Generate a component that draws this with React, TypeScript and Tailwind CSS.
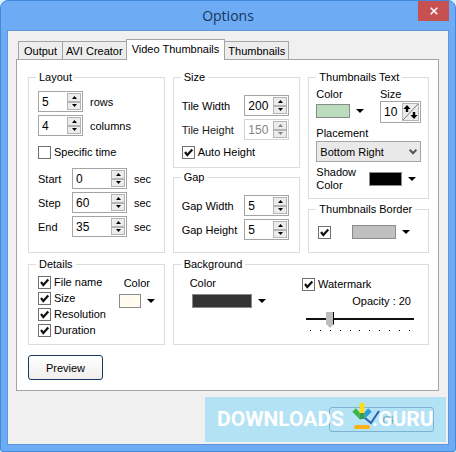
import React, { useId, useState } from "react";

const TABS = ["Output", "AVI Creator", "Video Thumbnails", "Thumbnails"];
const DETAILS = ["File name", "Size", "Resolution", "Duration"];
const TICKS = Array.from({ length: 11 }, (_, i) => i);

type GroupProps = {
  title: string;
  className?: string;
  bodyClass: string;
  children: React.ReactNode;
};

const Group: React.FC<GroupProps> = ({
  title,
  className = "",
  bodyClass,
  children,
}) => (
  <fieldset className={`min-w-0 border border-[#dcdcdc] ${className}`}>
    <legend className="ml-[7px] px-[3px] leading-[14px] whitespace-nowrap">
      {title}
    </legend>
    <div className={bodyClass}>{children}</div>
  </fieldset>
);

type SpinnerProps = {
  id: string;
  initial: number;
  wide?: boolean;
  disabled?: boolean;
};

const Spinner: React.FC<SpinnerProps> = ({ id, initial, wide, disabled }) => {
  const [value, setValue] = useState(initial);
  const buttonClass =
    "flex flex-1 items-center justify-center border border-[#b4b4b4] bg-[#ececec]";

  return (
    <div
      className={`flex h-[21px] shrink-0 border p-px ${
        wide ? "w-[55px]" : "w-[45px]"
      } ${
        disabled
          ? "border-[#d4d4d4] text-[#858585]"
          : "border-[#a5a5a5] text-black"
      }`}
    >
      <input
        id={id}
        type="text"
        inputMode="numeric"
        disabled={disabled}
        value={value}
        onChange={(e) => setValue(Number(e.target.value) || 0)}
        className="w-0 min-w-0 flex-1 bg-transparent pl-[2px] text-[12px] outline-none"
      />
      <div className="flex w-[14px] flex-col">
        <button
          type="button"
          aria-label="Increase"
          disabled={disabled}
          onClick={() => setValue(value + 1)}
          className={buttonClass}
        >
          <svg viewBox="0 0 5 3" className="h-[3px] w-[5px]" fill="currentColor">
            <path d="M0 3L2.5 0L5 3Z" />
          </svg>
        </button>
        <button
          type="button"
          aria-label="Decrease"
          disabled={disabled}
          onClick={() => setValue(value - 1)}
          className={buttonClass}
        >
          <svg viewBox="0 0 5 3" className="h-[3px] w-[5px]" fill="currentColor">
            <path d="M0 0L2.5 3L5 0Z" />
          </svg>
        </button>
      </div>
    </div>
  );
};

type CheckProps = {
  label: string;
  hideLabel?: boolean;
  initial?: boolean;
};

const Check: React.FC<CheckProps> = ({ label, hideLabel, initial = false }) => {
  const id = useId();
  const [checked, setChecked] = useState(initial);

  return (
    <div className="flex items-center gap-[3px]">
      <span className="grid size-[13px] shrink-0">
        <input
          id={id}
          type="checkbox"
          checked={checked}
          aria-label={hideLabel ? label : undefined}
          onChange={(e) => setChecked(e.target.checked)}
          className="size-[13px] appearance-none border border-[#707070] bg-white [grid-area:1/1]"
        />
        {checked && (
          <svg
            viewBox="0 0 13 13"
            className="pointer-events-none size-[13px] [grid-area:1/1]"
            fill="none"
            stroke="#111"
            strokeWidth="2.2"
          >
            <path d="M3 6L5.3 9L10.3 3.5" />
          </svg>
        )}
      </span>
      {!hideLabel && (
        <label htmlFor={id} className="whitespace-nowrap">
          {label}
        </label>
      )}
    </div>
  );
};

const ColorPicker: React.FC<{ label: string; swatch: string }> = ({
  label,
  swatch,
}) => (
  <button type="button" aria-label={label} className="flex items-center gap-[6px]">
    <span className={`h-[14px] border border-[#8a8a8a] ${swatch}`} />
    <svg viewBox="0 0 8 4" className="h-1 w-2">
      <path d="M0 0H8L4 4Z" />
    </svg>
  </button>
);

const App: React.FC = () => {
  const [tab, setTab] = useState("Video Thumbnails");
  const [placement, setPlacement] = useState("Bottom Right");
  const [fontSize, setFontSize] = useState(10);
  const [opacity, setOpacity] = useState(20);

  return (
    <div className="min-h-screen bg-[#d9f0fb] font-['Liberation_Sans',Arial,sans-serif] text-[11px] leading-[14px] text-black">
      <div className="flex min-h-screen flex-col rounded-t-lg rounded-b-[3px] border border-[#4289dc] bg-[#6dabf4] px-[6px] pb-[6px]">
        {/* title bar */}
        <header className="relative flex h-[29px] items-center justify-center">
          <h1 className="font-['Open_Sans',sans-serif] text-[14px] leading-5 text-[#16365c]">
            Options
          </h1>
          <button
            type="button"
            aria-label="Close"
            className="absolute top-0 right-0 flex h-5 w-[31px] items-center justify-center bg-[#c75050]"
          >
            <svg
              viewBox="0 0 8 8"
              className="size-2"
              fill="none"
              stroke="#fff"
              strokeWidth="1.6"
            >
              <path d="M0.7 0.7L7.3 7.3M7.3 0.7L0.7 7.3" />
            </svg>
          </button>
        </header>

        <main className="relative flex flex-1 flex-col border border-[#5d97d8] bg-[#f0f0f0] px-2 pt-2">
          {/* tabs */}
          <div role="tablist" className="z-10 -mb-px flex items-end px-[2px]">
            {TABS.map((name) => (
              <button
                key={name}
                type="button"
                role="tab"
                aria-selected={tab === name}
                onClick={() => setTab(name)}
                className={
                  tab === name
                    ? "h-[21px] border border-b-0 border-[#a5a5a5] bg-white px-[5px] pb-[3px]"
                    : "-mr-px h-[19px] min-w-[45px] border border-[#a5a5a5] bg-[#ededed] px-[3px] nth-4:-ml-px"
                }
              >
                {name}
              </button>
            ))}
          </div>

          <div className="mr-[1px] border border-[#a5a5a5] bg-white py-[10px] pr-[9px] pl-[11px]">
            <div className="grid grid-cols-[137fr_128fr_121fr] gap-x-2 gap-y-1">
              <Group title="Layout" bodyClass="px-[9px] pt-[7px]">
                <div className="flex flex-col gap-[3px]">
                  <div className="flex items-center gap-[7px]">
                    <Spinner id="rows" initial={5} />
                    <label htmlFor="rows">rows</label>
                  </div>
                  <div className="flex items-center gap-[7px]">
                    <Spinner id="columns" initial={4} />
                    <label htmlFor="columns">columns</label>
                  </div>
                </div>
                <div className="my-[9px]">
                  <Check label="Specific time" />
                </div>
                <div className="flex flex-col gap-[3px]">
                  <div className="flex items-center">
                    <label htmlFor="start" className="w-[34px]">Start</label>
                    <Spinner id="start" initial={0} wide />
                    <span className="ml-[7px]">sec</span>
                  </div>
                  <div className="flex items-center">
                    <label htmlFor="step" className="w-[34px]">Step</label>
                    <Spinner id="step" initial={60} wide />
                    <span className="ml-[7px]">sec</span>
                  </div>
                  <div className="flex items-center">
                    <label htmlFor="end" className="w-[34px]">End</label>
                    <Spinner id="end" initial={35} wide />
                    <span className="ml-[7px]">sec</span>
                  </div>
                </div>
              </Group>

              <div className="flex flex-col gap-0.5">
                <Group title="Size" bodyClass="px-2 pt-[11px] pb-2">
                  <div className="flex flex-col gap-[3px] pr-[2px]">
                    <div className="flex items-center justify-between">
                      <label htmlFor="tile-width">Tile Width</label>
                      <Spinner id="tile-width" initial={200} />
                    </div>
                    <div className="flex items-center justify-between">
                      <label htmlFor="tile-height" className="text-[#222]">
                        Tile Height
                      </label>
                      <Spinner id="tile-height" initial={150} disabled />
                    </div>
                  </div>
                  <div className="mt-[5px]">
                    <Check label="Auto Height" initial />
                  </div>
                </Group>
                <Group title="Gap" className="flex-1" bodyClass="px-2 pt-[11px] pb-3">
                  <div className="flex flex-col gap-[3px] pr-[2px]">
                    <div className="flex items-center justify-between">
                      <label htmlFor="gap-width">Gap Width</label>
                      <Spinner id="gap-width" initial={5} />
                    </div>
                    <div className="flex items-center justify-between">
                      <label htmlFor="gap-height">Gap Height</label>
                      <Spinner id="gap-height" initial={5} />
                    </div>
                  </div>
                </Group>
              </div>

              <div className="flex flex-col gap-[3px]">
                <Group
                  title="Thumbnails Text"
                  bodyClass="px-[7px] pt-[3px] pb-[6px]"
                >
                  <div className="flex justify-between">
                    <div>
                      <div className="mb-[3px]">Color</div>
                      <ColorPicker label="Text color" swatch="w-[34px] bg-[#bcdcbe]" />
                    </div>
                    <div>
                      <label htmlFor="font-size" className="block">Size</label>
                      <div className="flex h-[22px] w-[41px] border border-[#a5a5a5] p-px">
                        <input
                          id="font-size"
                          type="text"
                          inputMode="numeric"
                          value={fontSize}
                          onChange={(e) => setFontSize(Number(e.target.value) || 0)}
                          className="w-0 min-w-0 flex-1 pl-[2px] text-[12px] outline-none"
                        />
                        <button
                          type="button"
                          aria-label="Change size"
                          onClick={() => setFontSize(fontSize + 1)}
                          className="w-[17px] border border-[#b4b4b4] bg-[#ececec]"
                        >
                          <svg viewBox="0 0 15 16" className="h-4 w-[15px]">
                            <path d="M0 16L15 0" stroke="#777" />
                            <path d="M4 1L7.5 5H5.2V8H2.8V5H0.5ZM11 15L14.5 11H12.2V8H9.8V11H7.5Z" />
                          </svg>
                        </button>
                      </div>
                    </div>
                  </div>
                  <label htmlFor="placement" className="mt-[3px] block">
                    Placement
                  </label>
                  <div className="mt-px grid items-center">
                    <select
                      id="placement"
                      value={placement}
                      onChange={(e) => setPlacement(e.target.value)}
                      className="h-[21px] w-full appearance-none border border-[#a5a5a5] bg-[#e9e9e9] pl-[3px] [grid-area:1/1]"
                    >
                      <option>Bottom Right</option>
                      <option>Bottom Left</option>
                      <option>Top Right</option>
                      <option>Top Left</option>
                    </select>
                    <svg
                      viewBox="0 0 8 6"
                      className="pointer-events-none mr-1 h-[6px] w-2 justify-self-end [grid-area:1/1]"
                      fill="none"
                      stroke="#555"
                      strokeWidth="2"
                    >
                      <path d="M0.7 0.7L4 4.3L7.3 0.7" />
                    </svg>
                  </div>
                  <div className="mt-1 flex items-center justify-between pr-[5px] leading-[13px]">
                    <div className="w-10">Shadow Color</div>
                    <ColorPicker label="Shadow color" swatch="w-[33px] bg-black" />
                  </div>
                </Group>
                <Group
                  title="Thumbnails Border"
                  className="flex-1"
                  bodyClass="px-[9px] pt-[9px]"
                >
                  <div className="flex items-center gap-[21px]">
                    <Check label="Show border" hideLabel initial />
                    <ColorPicker label="Border color" swatch="w-11 bg-[#c0c0c0]" />
                  </div>
                </Group>
              </div>

              <Group title="Details" className="h-[88px]" bodyClass="px-[9px] pt-1">
                <div className="flex justify-between">
                  <div className="flex flex-col gap-[2px]">
                    {DETAILS.map((name) => (
                      <Check key={name} label={name} initial />
                    ))}
                  </div>
                  <div className="pt-px">
                    <div className="mb-1 pl-[5px]">Color</div>
                    <ColorPicker label="Details color" swatch="w-[22px] bg-[#fffbef]" />
                  </div>
                </div>
              </Group>

              <Group
                title="Background"
                className="col-span-2"
                bodyClass="px-[14px] pt-[5px]"
              >
                <div className="flex justify-between">
                  <div>
                    <div className="mb-1 pl-[2px]">Color</div>
                    <div className="pl-1">
                      <ColorPicker label="Background color" swatch="w-[60px] bg-[#333]" />
                    </div>
                  </div>
                  <div className="flex w-[112px] flex-col pt-px">
                    <Check label="Watermark" initial />
                    <label htmlFor="opacity" className="mt-[3px] pr-[3px] text-right">
                      Opacity : {opacity}
                    </label>
                    <input
                      id="opacity"
                      type="range"
                      min={0}
                      max={100}
                      step={10}
                      value={opacity}
                      onChange={(e) => setOpacity(Number(e.target.value))}
                      className="mt-1 ml-1 h-4 w-[108px] appearance-none bg-[linear-gradient(#111,#111)] bg-size-[100%_2px] bg-position-[0_6px] bg-no-repeat [&::-webkit-slider-thumb]:h-4 [&::-webkit-slider-thumb]:w-2 [&::-webkit-slider-thumb]:appearance-none [&::-webkit-slider-thumb]:border-r [&::-webkit-slider-thumb]:border-black [&::-webkit-slider-thumb]:bg-[#bdbdbd] [&::-webkit-slider-thumb]:[clip-path:polygon(0_0,100%_0,100%_75%,50%_100%,0_75%)]"
                    />
                    <div className="mt-[2px] ml-1 flex justify-between px-1">
                      {TICKS.map((t) => (
                        <span key={t} className="size-px bg-black" />
                      ))}
                    </div>
                  </div>
                </div>
              </Group>
            </div>

            <button
              type="button"
              className="mt-[10px] h-[25px] w-[75px] rounded-[3px] border border-[#17375f] bg-linear-to-b from-white to-[#efeeec]"
            >
              Preview
            </button>
          </div>

          <div className="mt-4 mr-[6px] flex justify-end">
            <button
              type="button"
              className="h-[25px] w-[105px] rounded-[3px] border border-[#17375f] bg-[#f4f4f4] pl-[16px]"
            >
              Ok
            </button>
          </div>

          {/* site badge over the window */}
          <div className="absolute right-[2px] bottom-[2px] z-20 flex h-[45px] w-[241px] items-center bg-[#a0ddf7]/75 pl-3 font-['Roboto',sans-serif] text-[21px] leading-none font-bold text-white">
            <span>DOWNLOADS</span>
            <svg viewBox="0 0 28 28" className="-mr-2 mb-2 ml-2 size-7" fill="none">
              <path d="M2 8L10 16" stroke="#3bb54a" strokeWidth="5" />
              <path d="M18 8L11 15" stroke="#2a9ddb" strokeWidth="5" />
              <path d="M10 3V14" stroke="#fcdc1c" strokeWidth="5" strokeLinecap="round" />
              <path d="M10 11V17" stroke="#2f9e57" strokeWidth="5" />
              <path d="M13 16L19 21L27 9" stroke="#2c62b5" strokeWidth="2" />
              <path d="M4 25H16" stroke="#fbb016" strokeWidth="4" strokeLinecap="round" />
            </svg>
            <span>.GURU</span>
          </div>
        </main>
      </div>
    </div>
  );
};

export default App;
